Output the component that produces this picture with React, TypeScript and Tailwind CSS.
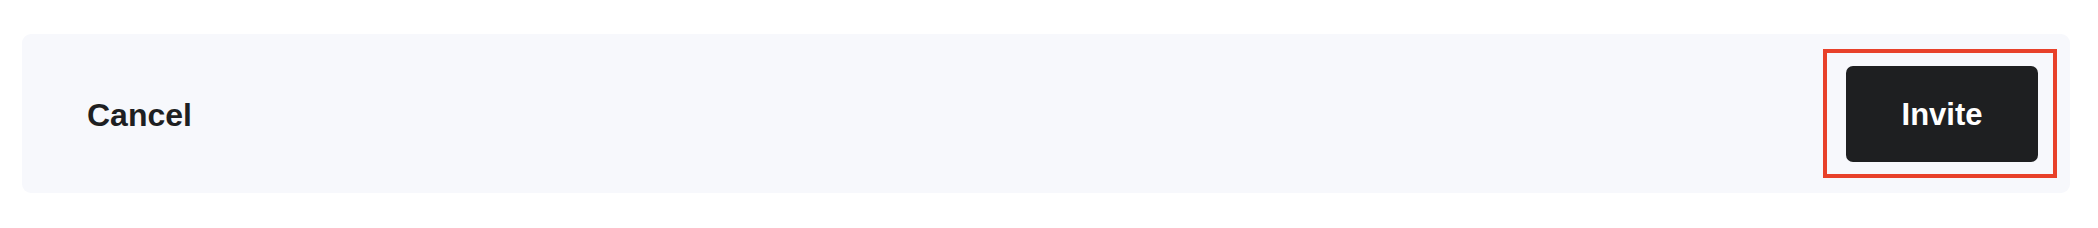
const App = () => {
  return (
    <div className="w-full h-[228px] bg-white pt-[34px] pl-[22px] pr-[28px] font-['Liberation_Sans',Arial,sans-serif]">
      <div className="flex flex-row items-center justify-between h-[159px] rounded-[9px] bg-[#f7f8fc] pl-[65px] pr-[13px]">
        <button className="text-[32px] font-bold text-[#1e1f22] leading-none pt-[2px]">
          Cancel
        </button>
        <div className="border-4 border-[#e8412a] pl-[19px] pr-[15px] pt-[13px] pb-[12px]">
          <button className="flex items-center justify-center w-[192px] h-[96px] rounded-[7px] bg-[#1e1f21] text-white text-[31px] font-bold leading-none">
            Invite
          </button>
        </div>
      </div>
    </div>
  );
};

export default App;
